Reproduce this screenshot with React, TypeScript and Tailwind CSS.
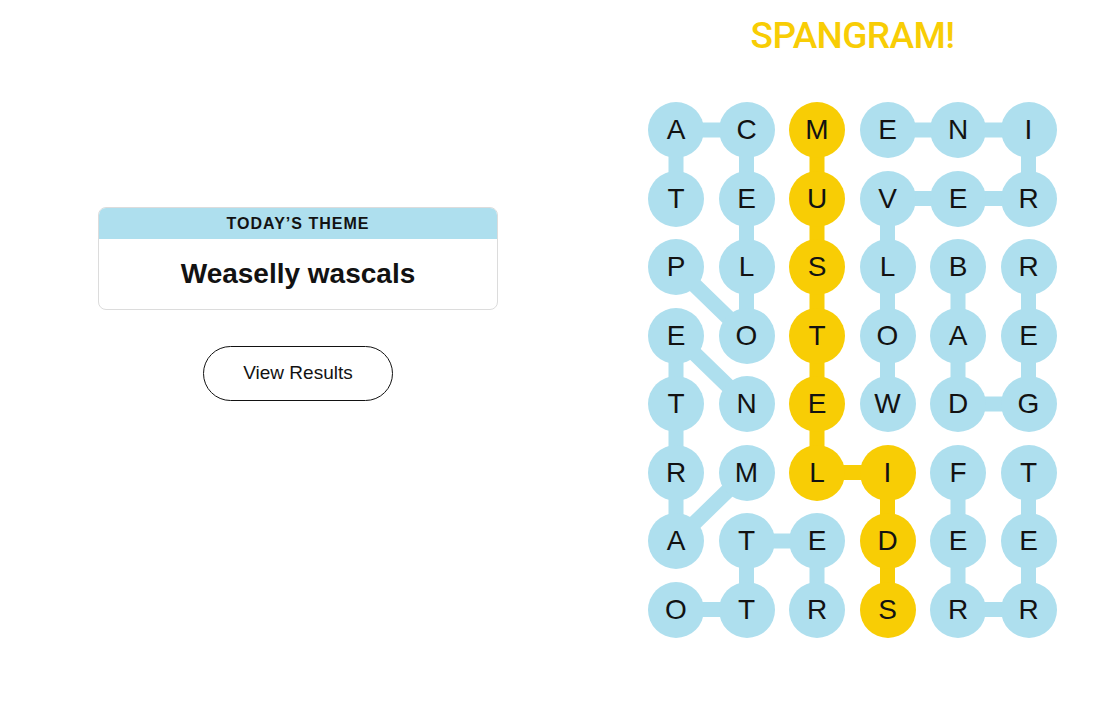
import React from 'react';

const BLUE = '#aedfee';
const YELLOW = '#f8cd05';

const board = [
  'ACMENI',
  'TEUVER',
  'PLSLBR',
  'EOTOAE',
  'TNEWDG',
  'RMLIFT',
  'ATEDEE',
  'OTRSRR',
];

// [row, col] paths, drawn as connected chains
const words: { cells: [number, number][]; spangram?: boolean }[] = [
  { cells: [[2, 0], [3, 1], [2, 1], [1, 1], [0, 1], [0, 0], [1, 0]] }, // POLECAT
  { cells: [[5, 1], [6, 0], [5, 0], [4, 0], [3, 0], [4, 1]] }, // MARTEN
  { cells: [[7, 0], [7, 1], [6, 1], [6, 2], [7, 2]] }, // OTTER
  { cells: [[4, 3], [3, 3], [2, 3], [1, 3], [1, 4], [1, 5], [0, 5], [0, 4], [0, 3]] }, // WOLVERINE
  { cells: [[2, 4], [3, 4], [4, 4], [4, 5], [3, 5], [2, 5]] }, // BADGER
  { cells: [[5, 4], [6, 4], [7, 4], [7, 5], [6, 5], [5, 5]] }, // FERRET
  { cells: [[0, 2], [1, 2], [2, 2], [3, 2], [4, 2], [5, 2], [5, 3], [6, 3], [7, 3]], spangram: true },
];

const spangramCells = new Set(
  words.filter((w) => w.spangram).flatMap((w) => w.cells.map(([r, c]) => `${r}-${c}`))
);

const cx = (c: number) => 28 + c * 70.5;
const cy = (r: number) => 28 + r * 68.5;

function Board() {
  return (
    <div className="relative">
      <svg className="absolute left-0 top-0" width={408.5} height={535.5}>
        {words.map((w, i) => (
          <polyline
            key={i}
            points={w.cells.map(([r, c]) => `${cx(c)},${cy(r)}`).join(' ')}
            fill="none"
            stroke={w.spangram ? YELLOW : BLUE}
            strokeWidth={15}
            strokeLinejoin="round"
          />
        ))}
      </svg>
      <div className="relative grid grid-cols-[repeat(6,56px)] gap-x-[14.5px] gap-y-[12.5px]">
        {board.flatMap((row, r) =>
          row.split('').map((ch, c) => (
            <div
              key={`${r}-${c}`}
              className={`w-14 h-14 rounded-full flex items-center justify-center text-[28px] leading-none text-[#121212] ${
                spangramCells.has(`${r}-${c}`) ? 'bg-[#f8cd05]' : 'bg-[#aedfee]'
              }`}
            >
              {ch}
            </div>
          ))
        )}
      </div>
    </div>
  );
}

export default function App() {
  return (
    <div className="w-[1118px] h-[716px] bg-white flex font-['Liberation_Sans',Arial,sans-serif] text-[#121212]">
      <div className="w-[596px] pt-[207px] flex flex-col items-center">
        <div className="w-[400px] h-[103px] rounded-lg border border-[#dcdcdc] overflow-hidden flex flex-col">
          <div className="h-[31px] bg-[#aedfee] flex items-center justify-center text-[16px] font-bold tracking-[1px] uppercase">
            Today’s Theme
          </div>
          <div className="flex-1 flex items-center justify-center text-[28px] font-bold">
            Weaselly wascals
          </div>
        </div>
        <button className="mt-[36px] w-[190px] h-[55px] rounded-full border border-[#121212] bg-white text-[19px] text-[#121212]">
          View Results
        </button>
      </div>
      <div className="w-[513px] pt-[17px] flex flex-col items-center">
        <div className="font-['Roboto',sans-serif] text-[37px] font-medium leading-none text-[#f8cd05] tracking-[-0.6px]">
          SPANGRAM!
        </div>
        <div className="mt-[48px] self-start ml-[52px]">
          <Board />
        </div>
      </div>
    </div>
  );
}
